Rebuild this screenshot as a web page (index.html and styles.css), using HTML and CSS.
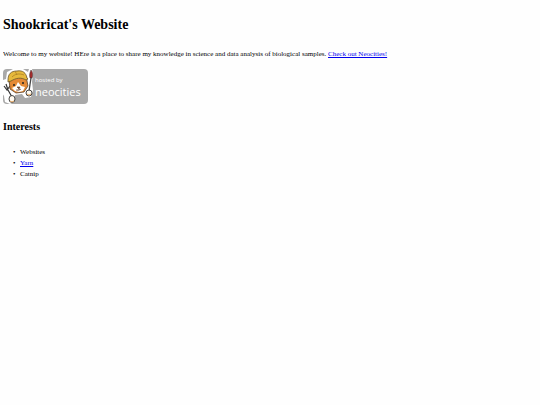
FILE: index.html
```
<!DOCTYPE html>
<html lang="en">
<head>
  <meta charset="UTF-8">
  <meta name="viewport" content="width=device-width, initial-scale=1.0">
  <title>Shookricat's Website</title>
  <link rel="stylesheet" href="styles.css">
</head>
<body>
  <h1>Shookricat's Website</h1>
  <p class="intro">Welcome to my website! HEre is a place to share my knowledge in science and data analysis of biological samples. <a href="https://neocities.org">Check out Neocities!</a></p>

  <a class="badge" href="https://neocities.org" aria-label="Hosted by Neocities">
    <svg class="badge-picture" viewBox="0 0 85 35">
      <rect x="0" y="0" width="85" height="35" rx="4" fill="#a9a9a9"/>
      <!-- white outline behind the cat -->
      <path d="M3 10 4 3 10 0h10l5 3 1-3h3l1 4-1 9 1 8-2 7-6 1-3-4-7 1-1 7-4 2-5-2-1-6-5-7-2-7z" fill="#fff"/>
      <!-- fork -->
      <path d="M1 17l3 4 3-4M3 15l2 6M5 21l4 7" fill="none" stroke="#333" stroke-width="1.2"/>
      <!-- brush -->
      <path d="M28 9l-2 13" stroke="#444" stroke-width="1.3"/>
      <path d="M27 9c-1-3 0-6 1-8 2 2 2 6 1 8z" fill="#a52a2a" stroke="#333" stroke-width=".5"/>
      <!-- face -->
      <path d="M6 10l1 10 6 4 8-1 4-6-2-10z" fill="#e58a35" stroke="#59412b" stroke-width=".8"/>
      <path d="M15 13l-2 4-4 2 3 3 4 1 4-1 2-4-4-1z" fill="#fff"/>
      <circle cx="11" cy="16" r="1" fill="#222"/>
      <circle cx="20" cy="14" r="1" fill="#222"/>
      <path d="M14 18h3l-1 2zM13 21q3 1 5-1" fill="#804735" stroke="#59412b" stroke-width=".6"/>
      <!-- hard hat -->
      <path d="M5 11C5 5 8 2 14 2c6-1 9 2 10 7l1 1-2 1c-5-3-10-2-15 1l-3 1z" fill="#e6b93c" stroke="#6b552b" stroke-width=".8"/>
      <path d="M9 8c3-3 7-4 12-2M12 2l2 4" fill="none" stroke="#a67a22" stroke-width=".7"/>
      <!-- paws -->
      <ellipse cx="9" cy="30" rx="3" ry="3.5" fill="#fffaf0" stroke="#333" stroke-width=".9"/>
      <ellipse cx="26" cy="24" rx="3" ry="3" fill="#fffaf0" stroke="#333" stroke-width=".9"/>
      <path d="M7 32q2 2 4 0M24 25q2 2 4 0" fill="none" stroke="#e5a662" stroke-width="1"/>
      <text class="badge-small" x="32" y="13">hosted by</text>
      <text class="badge-name" x="32" y="27">neocities</text>
    </svg>
  </a>

  <h2>Interests</h2>
  <ul class="interests">
    <li>Websites</li>
    <li><a href="https://en.wikipedia.org/wiki/Yarn">Yarn</a></li>
    <li>Catnip</li>
  </ul>
</body>
</html>
```

FILE: styles.css
```
body {
  margin: 17px 3px;
  background-color: #fefefe;
  color: #000;
  font-family: "Liberation Serif", "Times New Roman", serif;
  font-size: 7px;
  line-height: 11px;
}
h1 {
  margin: 0 0 16px;
  font-size: 14px;
  line-height: 16px;
}
h2 {
  margin: 16px 0 13px;
  font-size: 10px;
  line-height: 14px;
}
a {
  color: #0000ee;
}
.intro {
  margin: 0 0 9px;
}
.badge {
  display: block;
  width: 85px;
}
.badge-picture {
  display: block;
  width: 100%;
}
.badge-small,
.badge-name {
  fill: #fff;
  font-family: "Open Sans", sans-serif;
}
.badge-small {
  font-size: 6px;
}
.badge-name {
  font-size: 11px;
}
.interests {
  margin: 0;
  padding-left: 10px;
  list-style: none;
}
.interests li::before {
  content: "•";
  display: inline-block;
  width: 7px;
}
```
